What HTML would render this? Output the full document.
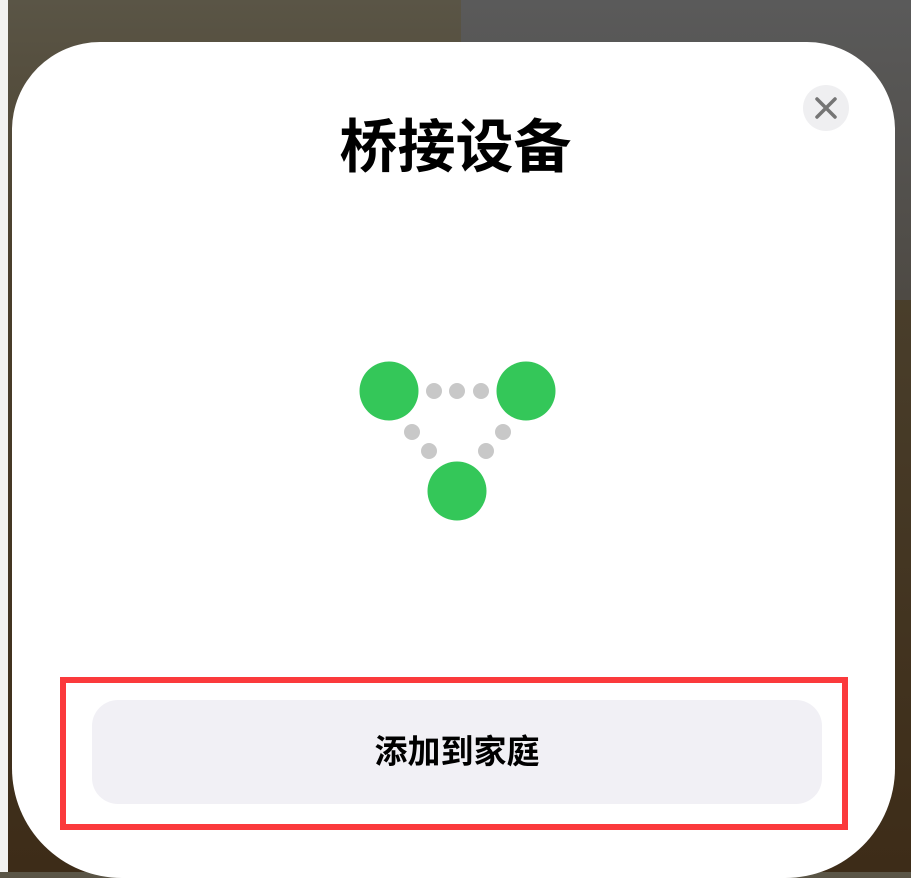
<!DOCTYPE html>
<html><head><meta charset="utf-8"><style>
html,body{margin:0;padding:0}
body{width:911px;height:872px;position:relative;overflow:hidden;background:linear-gradient(180deg,#5a5546 0%,#4a3f2c 30%,#3d2c18 100%);font-family:"Liberation Sans","Noto Sans CJK SC",sans-serif}
.bgr{position:absolute;right:0;top:0;width:450px;height:300px;background:linear-gradient(180deg,#5a5a5a,#4e4a44)}
.strip{position:absolute;left:0;top:0;width:8px;height:872px;background:#f2f2f0}
.card{position:absolute;left:12px;top:42px;width:883px;height:836px;background:#fff;border-radius:88px 88px 110px 110px}
.title{position:absolute;left:0;width:911px;top:110px;text-align:center;font-size:58px;font-weight:bold;color:#000;line-height:76px}
.close{position:absolute;left:803px;top:85px;width:46px;height:46px;border-radius:50%;background:#efeff1}
.red{position:absolute;left:60px;top:677px;width:776px;height:141px;border:6px solid #fb3a3c}
.btn{position:absolute;left:92px;top:700px;width:730px;height:104px;border-radius:26px;background:#f1f0f5;text-align:center;line-height:104px;font-size:33px;font-weight:bold;color:#000}
</style></head><body>
<div class="bgr"></div><div class="strip"></div>
<div class="card"></div>
<div class="title">桥接设备</div>
<div class="close"><svg width="46" height="46"><path d="M14 14L32 32M32 14L14 32" stroke="#757575" stroke-width="3.5" stroke-linecap="round"/></svg></div>
<svg style="position:absolute;left:0;top:0" width="911" height="872">
<g fill="#34c759"><circle cx="389" cy="391" r="29.5"/><circle cx="526" cy="391" r="29.5"/><circle cx="457" cy="491" r="29.5"/></g>
<g fill="#c8c8c8"><circle cx="434" cy="391" r="8"/><circle cx="457" cy="391" r="8"/><circle cx="481" cy="391" r="8"/><circle cx="412" cy="432" r="8"/><circle cx="429" cy="451" r="8"/><circle cx="486" cy="451" r="8"/><circle cx="503" cy="432" r="8"/></g>
</svg>
<div class="red"></div>
<div class="btn">添加到家庭</div>
</body></html>
